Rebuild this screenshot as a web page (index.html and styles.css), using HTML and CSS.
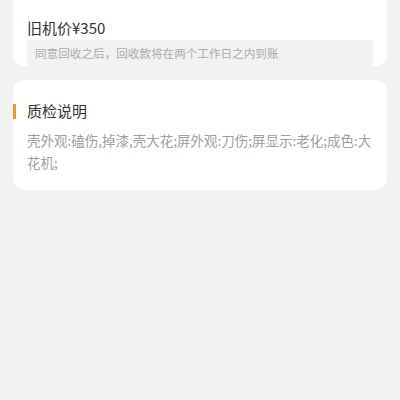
FILE: index.html
```html
<!DOCTYPE html>
<html lang="zh-CN">
<head>
    <meta charset="UTF-8">
    <meta name="viewport" content="width=device-width, initial-scale=1.0">
    <title>回收详情</title>
    <link rel="stylesheet" href="styles.css">
</head>
<body>
    <div class="page">
        <!-- 价格信息 -->
        <div class="card card-price">
            <div class="info-row">
                <span class="info-label">最高回收价</span>
                <span class="info-value">已报价</span>
            </div>
            <div class="old-price">旧机价¥350</div>
            <div class="tip-box">同意回收之后，回收款将在两个工作日之内到账</div>
        </div>

        <!-- 质检说明 -->
        <div class="card card-check">
            <h2 class="card-title">质检说明</h2>
            <p class="check-text">壳外观:磕伤,掉漆,壳大花;屏外观:刀伤;屏显示:老化;成色:大花机;</p>
        </div>
    </div>
</body>
</html>
```

FILE: styles.css
```css
body {
    margin: 0;
    background-color: #f2f2f2;
    font-family: "Noto Sans CJK SC", "Noto Sans", sans-serif;
    color: #333;
}

.page {
    padding: 0 13px;
}

.card {
    background-color: #fff;
    border-radius: 12px;
    padding: 20px 14px 17px;
    position: relative;
}

/* 价格卡片 */
.card-price {
    margin-top: -36px;
    padding: 16px 14px 0;
}

.info-row {
    display: flex;
    height: 20px;
    line-height: 20px;
    font-size: 14px;
    margin-bottom: 18px;
}

.info-label {
    color: #f29a80;
    width: 203px;
}

.info-value {
    color: #999;
}

.old-price {
    font-size: 15px;
    line-height: 20px;
    margin-bottom: 2px;
}

.tip-box {
    background-color: #f2f2f2;
    border-radius: 4px 4px 0 0;
    height: 26px;
    line-height: 26px;
    padding: 0 8px;
    font-size: 11.6px;
    color: #aaa;
}

/* 质检说明 */
.card-check {
    margin-top: 14px;
}

.card-title {
    margin: 0 0 7px;
    font-size: 15px;
    font-weight: normal;
    line-height: 22px;
    color: #333;
}

.card-title::before {
    content: "";
    position: absolute;
    left: 0;
    top: 24px;
    width: 3px;
    height: 15px;
    background-color: #f0952e;
}

.check-text {
    margin: 0;
    font-size: 13.5px;
    line-height: 22px;
    color: #a0a0a0;
}
```
